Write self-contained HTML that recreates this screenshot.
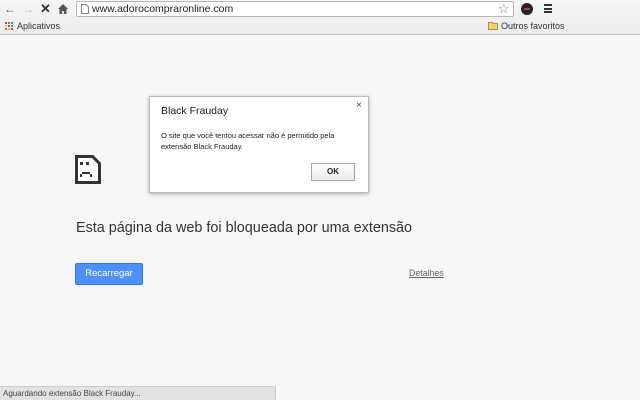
<!DOCTYPE html>
<html><head><meta charset="utf-8"><style>
*{margin:0;padding:0;box-sizing:border-box}
body{width:640px;height:400px;overflow:hidden;background:#f7f7f7;font-family:"Liberation Sans",sans-serif;position:relative}
.top{position:absolute;left:0;top:0;width:640px;height:35px;background:linear-gradient(#f6f6f6,#ececec);border-bottom:1px solid #c4c4c4}
.omni{position:absolute;left:76px;top:1px;width:438px;height:16px;background:#fff;border:1px solid #b8b8b8;border-radius:2px;font-size:10.5px;color:#222;padding:1px 0 0 15px}
.a{position:absolute}
</style></head><body>
<div class="top">
 <div class="a" style="left:4px;top:2px;font-size:12px;color:#555">&#8592;</div>
 <div class="a" style="left:22px;top:2px;font-size:12px;color:#bbb">&#8594;</div>
 <div class="a" style="left:40px;top:1px;font-size:13px;color:#333;font-weight:bold">&#x2715;</div>
 <svg class="a" style="left:58px;top:4px" width="10" height="10"><path d="M5 0L0 5h1.5v5h2.5V7h2v3h2.5V5H10z" fill="#555"/></svg>
 <div class="omni"><svg class="a" style="left:4px;top:2px" width="8" height="10"><path d="M.5.5h4.5l2.5 2.5v6.5h-7z" fill="none" stroke="#888"/></svg>www.adorocompraronline.com</div>
 <div class="a" style="left:498px;top:1px;font-size:13px;color:#777">&#9734;</div>
 <div class="a" style="left:521px;top:3px;width:12px;height:12px;border-radius:50%;background:#222"><div class="a" style="left:3px;top:5px;width:6px;height:2px;background:#c33"></div></div>
 <div class="a" style="left:544px;top:4px;width:8px;height:9px;border-top:2px solid #333;border-bottom:2px solid #333"><div class="a" style="left:0;top:1.5px;width:8px;height:2px;background:#333"></div></div>
 <svg class="a" style="left:5px;top:22px" width="9" height="9"><g fill="#d44"><rect x="0" y="0" width="2" height="2"/><rect x="3" y="0" width="2" height="2" fill="#4a4"/><rect x="6" y="0" width="2" height="2" fill="#48d"/><rect x="0" y="3" width="2" height="2" fill="#fb3"/><rect x="3" y="3" width="2" height="2"/><rect x="6" y="3" width="2" height="2" fill="#4a4"/><rect x="0" y="6" width="2" height="2" fill="#48d"/><rect x="3" y="6" width="2" height="2" fill="#fb3"/><rect x="6" y="6" width="2" height="2"/></g></svg>
 <div class="a" style="left:17px;top:21px;font-size:9px;color:#333">Aplicativos</div>
 <svg class="a" style="left:488px;top:21px" width="10" height="9"><path d="M.5 1.5h3.5l1 1h4.5v6h-9z" fill="#f2d27a" stroke="#b8923a"/></svg>
 <div class="a" style="left:501px;top:21px;font-size:9px;color:#333">Outros favoritos</div>
</div>
<svg class="a" style="left:75px;top:155px" width="26" height="29"><path d="M1.5 1.5h16l7 7v19h-23z" fill="#fff" stroke="#333" stroke-width="3"/><rect x="5" y="7" width="3" height="3" fill="#333"/><rect x="11" y="7" width="3" height="3" fill="#333"/><rect x="7" y="17" width="8" height="2" fill="#333"/><rect x="5" y="19" width="2" height="3" fill="#333"/><rect x="15" y="19" width="2" height="3" fill="#333"/></svg>
<div class="a" style="left:76px;top:220px;font-size:14.4px;color:#333">Esta página da web foi bloqueada por uma extensão</div>
<div class="a" style="left:75px;top:263px;width:68px;height:22px;background:#4d90fe;border:1px solid #3079ed;border-radius:2px;color:#fff;font-size:9.5px;text-align:center;line-height:20px">Recarregar</div>
<div class="a" style="left:409px;top:268px;font-size:8.8px;color:#666;text-decoration:underline">Detalhes</div>
<div class="a" style="left:149px;top:96px;width:220px;height:97px;background:#fff;border:1px solid #bbb;box-shadow:0 1px 4px rgba(0,0,0,.3)">
 <div class="a" style="left:11px;top:8px;font-size:10.5px;color:#222">Black Frauday</div>
 <div class="a" style="left:206px;top:3px;font-size:10px;color:#444">×</div>
 <div class="a" style="left:11px;top:33px;font-size:7.5px;color:#222;line-height:11px;width:200px">O site que você tentou acessar não é permitido pela<br>extensão Black Frauday.</div>
 <div class="a" style="left:161px;top:66px;width:44px;height:18px;border:1px solid #9ab;background:linear-gradient(#fdfdfd,#ececec);font-size:8px;font-weight:bold;text-align:center;line-height:16px;color:#222">OK</div>
</div>
<div class="a" style="left:0;top:386px;width:276px;height:14px;background:#e2e2e2;border-top:1px solid #ccc;border-right:1px solid #ccc;font-size:8px;color:#444;padding:2px 0 0 3px">Aguardando extensão Black Frauday...</div>
</body></html>
